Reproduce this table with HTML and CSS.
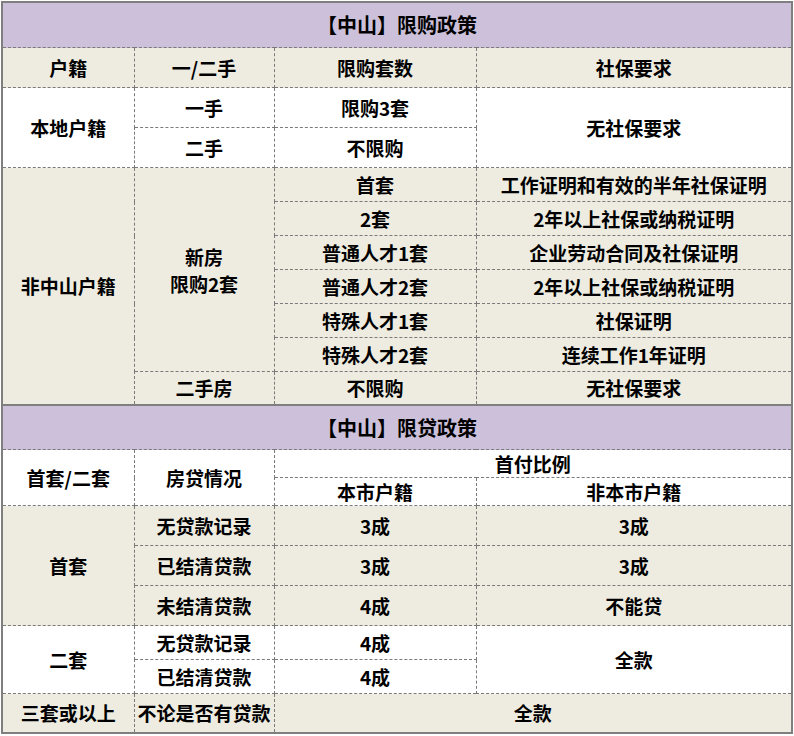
FILE: index.html
```html
<!DOCTYPE html>
<html lang="zh-CN">
<head>
<meta charset="utf-8">
<link rel="stylesheet" href="styles.css">
</head>
<body>
<div class="sheet">
  <table class="grid">
    <colgroup><col class="c1"><col class="c2"><col class="c3"><col class="c4"></colgroup>
    <tr class="title"><td colspan="4">【中山】限购政策</td></tr>
    <tr class="beige h40"><td>户籍</td><td>一/二手</td><td>限购套数</td><td>社保要求</td></tr>
    <tr class="white h40"><td rowspan="2">本地户籍</td><td>一手</td><td>限购3套</td><td rowspan="2">无社保要求</td></tr>
    <tr class="white h40"><td>二手</td><td>不限购</td></tr>
    <tr class="beige h34"><td rowspan="7">非中山户籍</td><td rowspan="6" class="two">新房<br>限购2套</td><td>首套</td><td>工作证明和有效的半年社保证明</td></tr>
    <tr class="beige h34"><td>2套</td><td>2年以上社保或纳税证明</td></tr>
    <tr class="beige h34"><td>普通人才1套</td><td>企业劳动合同及社保证明</td></tr>
    <tr class="beige h34"><td>普通人才2套</td><td>2年以上社保或纳税证明</td></tr>
    <tr class="beige h34"><td>特殊人才1套</td><td>社保证明</td></tr>
    <tr class="beige h34"><td>特殊人才2套</td><td>连续工作1年证明</td></tr>
    <tr class="beige h33"><td>二手房</td><td>不限购</td><td>无社保要求</td></tr>
  </table>
  <div class="divider"></div>
  <table class="grid">
    <colgroup><col class="c1"><col class="c2"><col class="c3"><col class="c4"></colgroup>
    <tr class="title t2"><td colspan="4">【中山】限贷政策</td></tr>
    <tr class="white h28"><td rowspan="2">首套/二套</td><td rowspan="2">房贷情况</td><td colspan="2">首付比例</td></tr>
    <tr class="white h28"><td>本市户籍</td><td>非本市户籍</td></tr>
    <tr class="beige h40"><td rowspan="3">首套</td><td>无贷款记录</td><td>3成</td><td>3成</td></tr>
    <tr class="beige h40"><td>已结清贷款</td><td>3成</td><td>3成</td></tr>
    <tr class="beige h40"><td>未结清贷款</td><td>4成</td><td>不能贷</td></tr>
    <tr class="white h34"><td rowspan="2">二套</td><td>无贷款记录</td><td>4成</td><td rowspan="2">全款</td></tr>
    <tr class="white h34"><td>已结清贷款</td><td>4成</td></tr>
    <tr class="beige h39"><td>三套或以上</td><td>不论是否有贷款</td><td colspan="2">全款</td></tr>
  </table>
</div>
</body>
</html>
```

FILE: styles.css
```css
html, body {
  margin: 0;
  padding: 0;
  background: #ffffff;
}

body {
  padding: 1px 0 0 1px;
  font-family: "Noto Sans CJK SC", "Noto Sans", sans-serif;
  font-weight: 700;
  color: #000000;
}

.sheet {
  width: 788px;
  border: 2px solid #7f7f7f;
}

.grid {
  width: 788px;
  border-collapse: collapse;
  border-style: hidden;
  table-layout: fixed;
}

.c1 { width: 131px; }
.c2 { width: 140px; }
.c3 { width: 202px; }
.c4 { width: 315px; }

.grid td {
  border: 1px dashed #7a7a7a;
  padding: 0;
  text-align: center;
  vertical-align: middle;
  font-size: 19px;
  line-height: 24px;
  white-space: nowrap;
}

.title td {
  background: #ccc0da;
  font-size: 20px;
  height: 44px;
}

.t2 td {
  height: 43px;
}

.beige td { background: #eeece1; }
.white td { background: #ffffff; }

.h40 td { height: 39px; }
.h34 td { height: 33px; }
.h33 td { height: 32px; }
.h39 td { height: 38px; }
.h28 td { height: 27px; }

.grid td.two {
  line-height: 27px;
}

.divider {
  height: 2px;
  background: #7f7f7f;
}
```
